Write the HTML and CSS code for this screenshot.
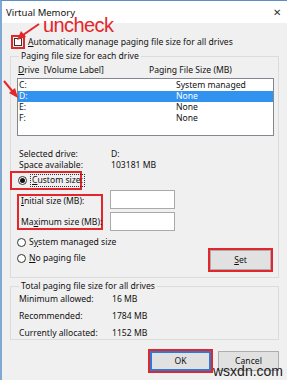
FILE: index.html
```html
<!DOCTYPE html>
<html lang="en">
<head>
  <meta charset="UTF-8">
  <title>Virtual Memory</title>
  <link rel="stylesheet" href="styles.css">
</head>
<body>
  <div class="window">
    <div class="titlebar">
      <span>Virtual Memory</span>
      <span class="close">✕</span>
    </div>

    <div class="content">
      <div class="auto-row">
        <span class="red-box check-box"><span class="checkbox"></span></span>
        <span><u>A</u>utomatically manage paging file size for all drives</span>
      </div>

      <fieldset class="group group-drives">
        <legend>Paging file size for each drive</legend>
        <div class="list-head">
          <span><u>D</u>rive&nbsp; [Volume Label]</span>
          <span>Paging File Size (MB)</span>
        </div>
        <div class="drive-list">
          <div class="drive"><span>C:</span><span>System managed</span></div>
          <div class="drive selected"><span>D:</span><span>None</span></div>
          <div class="drive"><span>E:</span><span>None</span></div>
          <div class="drive"><span>F:</span><span>None</span></div>
        </div>

        <div class="info">
          <span>Selected drive:</span><span>D:</span>
          <span>Space available:</span><span>103181 MB</span>
        </div>

        <div class="red-box custom-box">
          <span class="radio checked"></span>
          <span class="focus-label"><u>C</u>ustom size:</span>
        </div>

        <div class="sizes">
          <div class="red-box size-labels">
            <span><u>I</u>nitial size (MB):</span>
            <span>Ma<u>x</u>imum size (MB):</span>
          </div>
          <div class="size-inputs">
            <span class="input"></span>
            <span class="input"></span>
          </div>
        </div>

        <div class="bottom-row">
          <div class="radios">
            <div class="radio-row"><span class="radio"></span><span>S<u>y</u>stem managed size</span></div>
            <div class="radio-row"><span class="radio"></span><span><u>N</u>o paging file</span></div>
          </div>
          <span class="red-box set-box"><span class="button"><u>S</u>et</span></span>
        </div>
      </fieldset>

      <fieldset class="group group-total">
        <legend>Total paging file size for all drives</legend>
        <div class="totals">
          <span>Minimum allowed:</span><span>16 MB</span>
          <span>Recommended:</span><span>1784 MB</span>
          <span>Currently allocated:</span><span>1152 MB</span>
        </div>
      </fieldset>

      <div class="actions">
        <span class="red-box ok-box"><span class="button default">OK</span></span>
        <span class="button">Cancel</span>
      </div>
    </div>
  </div>

  <!-- annotations drawn over the dialog -->
  <div class="uncheck">uncheck</div>
  <svg class="arrows" width="287" height="380" viewBox="0 0 287 380">
    <line x1="39" y1="24" x2="23" y2="35" stroke="#e3262b" stroke-width="2"/>
    <polygon points="17,40 21,31 26,37" fill="#e3262b"/>
    <line x1="4" y1="81" x2="13" y2="92" stroke="#e3262b" stroke-width="2"/>
    <polygon points="18,98 9,93 15,88" fill="#e3262b"/>
  </svg>
  <div class="watermark">wsxdn.com</div>
</body>
</html>
```

FILE: styles.css
```css
:root {
  --face: #f0f0f0;
  --red: #e3262b;
  --line: #dcdcdc;
  --select: #3292f0;
}

* {
  box-sizing: border-box;
}

body {
  margin: 0;
  width: 287px;
  height: 380px;
  overflow: hidden;
  position: relative;
  background-color: var(--face);
  font-family: "Segoe UI", "Noto Sans", sans-serif;
  font-size: 8.6px;
  color: #111;
  white-space: nowrap;
}

u {
  text-decoration-thickness: 1px;
  text-underline-offset: 1px;
}

.window {
  height: 380px;
  border-top: 1px solid #5b8fc4;
  border-left: 2px solid #7fa8d2;
}

.titlebar {
  height: 22px;
  background-color: #fff;
  display: flex;
  align-items: center;
  justify-content: space-between;
  padding: 0 6px 0 4px;
  font-size: 9.5px;
}

.close {
  font-size: 10px;
  color: #333;
}

.content {
  padding: 0 8px 0 8px;
}

.red-box {
  border: 2px solid var(--red);
}

.auto-row {
  display: flex;
  align-items: center;
  gap: 3px;
  margin-top: 12px;
  margin-left: 1px;
}

.check-box {
  display: flex;
  padding: 1px;
}

.checkbox {
  width: 8px;
  height: 8px;
  border: 1px solid #333;
  background-color: #fff;
}

.group {
  margin: 0;
  border: 1px solid var(--line);
  padding: 0 3px 0 6px;
}

.group legend {
  padding: 0 2px;
  margin-left: 2px;
  line-height: 10px;
}

.group-drives {
  margin-top: 2px;
  height: 227px;
}

.list-head {
  display: grid;
  grid-template-columns: 131px 1fr;
  margin: 5px 0 0 1px;
  line-height: 9px;
}

.drive-list {
  margin-top: 3px;
  height: 58px;
  border: 1px solid #828790;
  background-color: #fff;
  padding-top: 1px;
  width: 257px;
}

.drive {
  display: grid;
  grid-template-columns: 157px 1fr;
  height: 11px;
  line-height: 11px;
  padding-left: 1px;
}

.drive.selected {
  background-color: var(--select);
  color: #fff;
}

.info {
  display: grid;
  grid-template-columns: 92px 1fr;
  margin: 13px 0 0 2px;
  line-height: 11px;
}

.custom-box {
  display: flex;
  align-items: center;
  gap: 3px;
  width: 72px;
  height: 19px;
  margin: 0 0 0 -7px;
  padding-left: 6px;
}

.radio {
  flex: none;
  width: 9px;
  height: 9px;
  border: 1px solid #333;
  border-radius: 50%;
  background-color: #fff;
  display: flex;
  align-items: center;
  justify-content: center;
}

.radio.checked::after {
  content: "";
  width: 5px;
  height: 5px;
  border-radius: 50%;
  background-color: #111;
}

.focus-label {
  border: 1px dotted #333;
  padding: 0 1px;
  line-height: 11px;
}

.sizes {
  display: flex;
  align-items: flex-start;
  gap: 7px;
  margin-top: 0;
}

.size-labels {
  display: flex;
  flex-direction: column;
  justify-content: space-between;
  width: 86px;
  height: 36px;
  margin-top: 4px;
  padding: 0 0 0 2px;
  line-height: 11px;
}

.size-inputs {
  display: flex;
  flex-direction: column;
  gap: 3px;
}

.input {
  width: 65px;
  height: 19px;
  border: 1px solid #a9a9a9;
  background-color: #fff;
}

.bottom-row {
  display: flex;
  justify-content: space-between;
  align-items: flex-start;
  margin-top: 6px;
}

.radios {
  display: flex;
  flex-direction: column;
  gap: 5px;
}

.radio-row {
  display: flex;
  align-items: center;
  gap: 3px;
  line-height: 11px;
}

.button {
  display: flex;
  align-items: center;
  justify-content: center;
  width: 61px;
  height: 20px;
  background-color: #e1e1e1;
  border: 1px solid #adadad;
}

.button.default {
  border: 2px solid #2a7ad6;
}

.set-box {
  margin-top: 11px;
  margin-right: 2px;
}

.group-total {
  margin-top: 3px;
  height: 59px;
}

.totals {
  display: grid;
  grid-template-columns: 93px 1fr;
  row-gap: 6px;
  margin: 3px 0 0 2px;
  line-height: 11px;
}

.actions {
  display: flex;
  justify-content: flex-end;
  align-items: center;
  gap: 5px;
  margin-top: 9px;
}

.ok-box {
  display: flex;
}

.uncheck {
  position: absolute;
  left: 43px;
  top: 17px;
  font-family: "Liberation Sans", Arial, sans-serif;
  font-size: 20px;
  line-height: 16px;
  letter-spacing: -0.6px;
  color: var(--red);
}

.arrows {
  position: absolute;
  left: 0;
  top: 0;
}

.watermark {
  position: absolute;
  left: 213px;
  top: 364px;
  font-family: "Liberation Sans", Arial, sans-serif;
  font-size: 14px;
  line-height: 14px;
  color: #222;
}
```
